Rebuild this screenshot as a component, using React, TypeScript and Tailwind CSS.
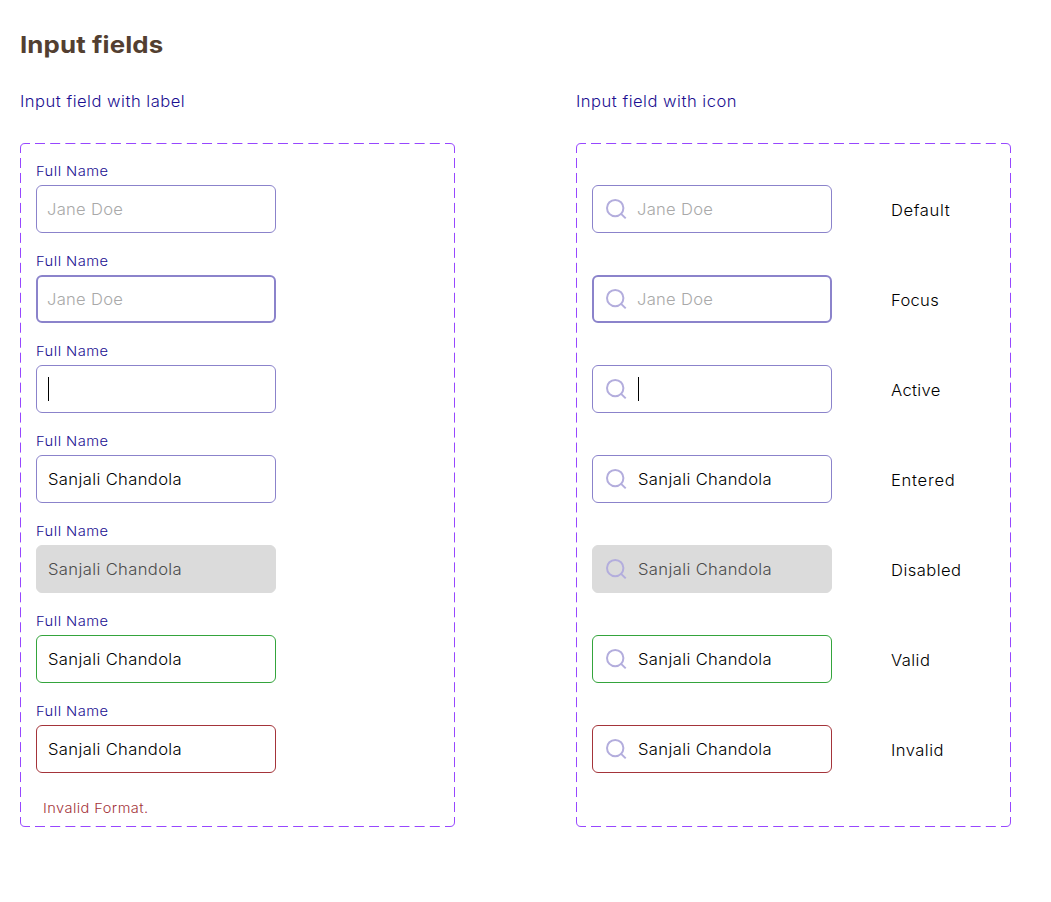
import { ReactNode } from "react";

type Kind = "default" | "focus" | "active" | "entered" | "disabled" | "valid" | "invalid";

const states: { kind: Kind; name: string; tracking: string }[] = [
  { kind: "default", name: "Default", tracking: "tracking-[0.58px]" },
  { kind: "focus", name: "Focus", tracking: "tracking-[0.28px]" },
  { kind: "active", name: "Active", tracking: "tracking-[0.3px]" },
  { kind: "entered", name: "Entered", tracking: "tracking-[0.68px]" },
  { kind: "disabled", name: "Disabled", tracking: "tracking-[0.42px]" },
  { kind: "valid", name: "Valid", tracking: "tracking-[0.4px]" },
  { kind: "invalid", name: "Invalid", tracking: "tracking-[0.42px]" },
];

const frame: Record<Kind, string> = {
  default: "border border-[#8b83cb]",
  focus: "border-2 border-[#8b83cb]",
  active: "border border-[#8b83cb]",
  entered: "border border-[#8b83cb]",
  disabled: "bg-[#dbdbdb] border border-[#dbdbdb]",
  valid: "border border-[#34a43c]",
  invalid: "border border-[#a4343a]",
};

function SearchIcon() {
  return (
    <svg className="h-6 w-6 shrink-0" viewBox="0 0 24 24" fill="none" stroke="#b3addd" strokeWidth="2">
      <circle cx="11.2" cy="11.1" r="8.2" />
      <path d="M16.6 16.4 L21.7 21.4" />
    </svg>
  );
}

function Value({ kind }: { kind: Kind }) {
  if (kind === "active") return <span className="h-6 w-px bg-black" />;
  if (kind === "default" || kind === "focus")
    return (
      <span className="-ml-px origin-left scale-x-[1.07] pt-0.5 text-[15.5px] font-light tracking-[0.26px] text-[#a9a9a9]">
        Jane Doe
      </span>
    );
  return (
    <span
      className={`origin-left scale-x-[1.07] pt-0.5 text-[15.5px] font-[350] tracking-[0.34px] ${
        kind === "disabled" ? "text-[#4c4c4c]" : "text-black"
      }`}
    >
      Sanjali Chandola
    </span>
  );
}

function Field({ kind, icon }: { kind: Kind; icon?: boolean }) {
  const pad = kind === "focus" ? "px-[10px]" : "px-[11px]";
  return (
    <div className={`flex h-12 w-60 items-center whitespace-nowrap rounded-[6px] ${pad} ${frame[kind]}`}>
      {icon && (
        <span className="mr-[10px] flex">
          <SearchIcon />
        </span>
      )}
      <Value kind={kind} />
    </div>
  );
}

function DashedFrame() {
  return (
    <svg className="absolute inset-0 h-[684px] w-[435px]" viewBox="0 0 435 684" fill="none" stroke="#9747ff">
      <path d="M15 .5H420M15 683.5H420" strokeDasharray="10 5.185" />
      <path d="M.5 15V669M434.5 15V669" strokeDasharray="10 4.977" />
      <path d="M.5 10V5Q.5 .5 5 .5H10M425 .5H430Q434.5 .5 434.5 5V10M434.5 674V679Q434.5 683.5 430 683.5H425M10 683.5H5Q.5 683.5 .5 679V674" />
    </svg>
  );
}

function Column({ title, children }: { title: string; children: ReactNode }) {
  return (
    <section className="w-[435px]">
      <h2 className="mb-[29px] h-6 text-[15.5px] font-[350] leading-6 text-[#1b0f91]">
        <span className="inline-block origin-left scale-x-[1.07] whitespace-nowrap tracking-[0.46px]">{title}</span>
      </h2>
      <div className="relative h-[684px] pl-4 pt-[18px]">
        <DashedFrame />
        {children}
      </div>
    </section>
  );
}

export default function App() {
  return (
    <main className="h-[902px] w-[1051px] overflow-hidden bg-white pl-5 pt-[29px] font-['Inter','Open_Sans',sans-serif]">
      <h1 className="mb-[29px] h-8 text-[23.5px] font-bold leading-8 text-[#533f31]">
        <span className="inline-block origin-left scale-x-[1.1] whitespace-nowrap tracking-[0.1px]">Input fields</span>
      </h1>
      <div className="flex gap-[121px]">
        <Column title="Input field with label">
          <div className="flex flex-col gap-[18px]">
            {states.map((s) => (
              <div key={s.kind} className="flex flex-col gap-1">
                <label className="h-5 text-[13.5px] font-[350] leading-5 text-[#1b0f91]">
                  <span className="inline-block origin-left scale-x-[1.09] tracking-[0.42px]">Full Name</span>
                </label>
                <Field kind={s.kind} />
              </div>
            ))}
          </div>
          <p className="ml-[7px] mt-[25px] text-[13.5px] font-[350] leading-5 text-[#a4343a]">
            <span className="inline-block origin-left scale-x-[1.08] tracking-[0.4px]">Invalid Format.</span>
          </p>
        </Column>
        <Column title="Input field with icon">
          <div className="flex flex-col gap-[42px] pt-6">
            {states.map((s) => (
              <div key={s.kind} className="flex items-center gap-[59px]">
                <Field kind={s.kind} icon />
                <span className={`origin-left scale-x-[1.07] pt-1 text-[15.5px] font-[350] text-black ${s.tracking}`}>
                  {s.name}
                </span>
              </div>
            ))}
          </div>
        </Column>
      </div>
    </main>
  );
}
